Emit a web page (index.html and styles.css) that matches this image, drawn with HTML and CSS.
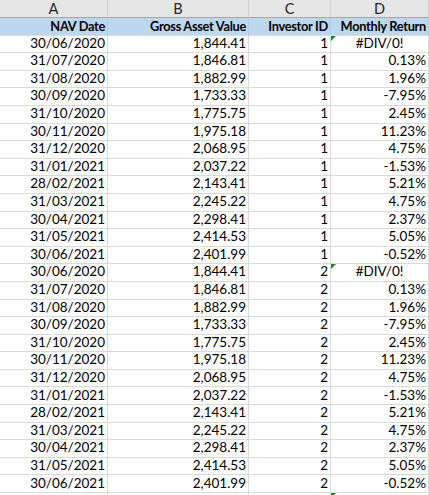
FILE: index.html
```html
<!DOCTYPE html>
<html>
<head>
<meta charset="utf-8">
<link rel="stylesheet" href="styles.css">
</head>
<body>
<div class="sheet">
  <div class="col-head">A</div><div class="col-head">B</div><div class="col-head">C</div><div class="col-head">D</div>
  <div class="hcell">NAV Date</div><div class="hcell">Gross Asset Value</div><div class="hcell">Investor ID</div><div class="hcell">Monthly Return</div>

  <div class="cell">30/06/2020</div><div class="cell">1,844.41</div><div class="cell">1</div><div class="cell err"><span class="tri"></span>#DIV/0!</div>
  <div class="cell">31/07/2020</div><div class="cell">1,846.81</div><div class="cell">1</div><div class="cell">0.13%</div>
  <div class="cell">31/08/2020</div><div class="cell">1,882.99</div><div class="cell">1</div><div class="cell">1.96%</div>
  <div class="cell">30/09/2020</div><div class="cell">1,733.33</div><div class="cell">1</div><div class="cell">-7.95%</div>
  <div class="cell">31/10/2020</div><div class="cell">1,775.75</div><div class="cell">1</div><div class="cell">2.45%</div>
  <div class="cell">30/11/2020</div><div class="cell">1,975.18</div><div class="cell">1</div><div class="cell">11.23%</div>
  <div class="cell">31/12/2020</div><div class="cell">2,068.95</div><div class="cell">1</div><div class="cell">4.75%</div>
  <div class="cell">31/01/2021</div><div class="cell">2,037.22</div><div class="cell">1</div><div class="cell">-1.53%</div>
  <div class="cell">28/02/2021</div><div class="cell">2,143.41</div><div class="cell">1</div><div class="cell">5.21%</div>
  <div class="cell">31/03/2021</div><div class="cell">2,245.22</div><div class="cell">1</div><div class="cell">4.75%</div>
  <div class="cell">30/04/2021</div><div class="cell">2,298.41</div><div class="cell">1</div><div class="cell">2.37%</div>
  <div class="cell">31/05/2021</div><div class="cell">2,414.53</div><div class="cell">1</div><div class="cell">5.05%</div>
  <div class="cell">30/06/2021</div><div class="cell">2,401.99</div><div class="cell">1</div><div class="cell">-0.52%</div>

  <div class="cell">30/06/2020</div><div class="cell">1,844.41</div><div class="cell">2</div><div class="cell err"><span class="tri"></span>#DIV/0!</div>
  <div class="cell">31/07/2020</div><div class="cell">1,846.81</div><div class="cell">2</div><div class="cell">0.13%</div>
  <div class="cell">31/08/2020</div><div class="cell">1,882.99</div><div class="cell">2</div><div class="cell">1.96%</div>
  <div class="cell">30/09/2020</div><div class="cell">1,733.33</div><div class="cell">2</div><div class="cell">-7.95%</div>
  <div class="cell">31/10/2020</div><div class="cell">1,775.75</div><div class="cell">2</div><div class="cell">2.45%</div>
  <div class="cell">30/11/2020</div><div class="cell">1,975.18</div><div class="cell">2</div><div class="cell">11.23%</div>
  <div class="cell">31/12/2020</div><div class="cell">2,068.95</div><div class="cell">2</div><div class="cell">4.75%</div>
  <div class="cell">31/01/2021</div><div class="cell">2,037.22</div><div class="cell">2</div><div class="cell">-1.53%</div>
  <div class="cell">28/02/2021</div><div class="cell">2,143.41</div><div class="cell">2</div><div class="cell">5.21%</div>
  <div class="cell">31/03/2021</div><div class="cell">2,245.22</div><div class="cell">2</div><div class="cell">4.75%</div>
  <div class="cell">30/04/2021</div><div class="cell">2,298.41</div><div class="cell">2</div><div class="cell">2.37%</div>
  <div class="cell">31/05/2021</div><div class="cell">2,414.53</div><div class="cell">2</div><div class="cell">5.05%</div>
  <div class="cell">30/06/2021</div><div class="cell">2,401.99</div><div class="cell">2</div><div class="cell">-0.52%</div>

  <div class="cell"></div><div class="cell"></div><div class="cell"></div><div class="cell"><span class="tri"></span></div>
</div>
</body>
</html>
```
FILE: styles.css
```css
html, body {
  margin: 0;
  padding: 0;
  background: #ffffff;
  overflow: hidden;
}

.sheet {
  display: grid;
  grid-template-columns: 108px 141px 82px 98px;
  grid-template-rows: 18px 17.6px;
  grid-auto-rows: 17.6px;
  font-family: Lato, "Liberation Sans", sans-serif;
  font-size: 13.5px;
  color: #000;
}

.col-head {
  background: #e6e6e6;
  border-right: 1px solid #d0d0d0;
  border-bottom: 1px solid #a6a6a6;
  color: #262626;
  font-size: 14.5px;
  display: flex;
  align-items: center;
  justify-content: center;
  box-sizing: border-box;
}

.hcell {
  background: #bdd7ee;
  border-right: 1px solid #b4cde3;
  border-bottom: 1px solid #d4dfe9;
  font-weight: bold;
  font-size: 12.8px;
  letter-spacing: -0.3px;
  display: flex;
  align-items: flex-end;
  justify-content: flex-end;
  padding: 0 2px 2px 0;
  box-sizing: border-box;
  line-height: 1;
  white-space: nowrap;
  overflow: hidden;
}

.cell {
  position: relative;
  border-right: 1px solid #dadada;
  border-bottom: 1px solid #dadada;
  display: flex;
  align-items: flex-end;
  justify-content: flex-end;
  padding: 0 2px 2px 0;
  box-sizing: border-box;
  line-height: 1;
  white-space: nowrap;
}

.cell.err {
  justify-content: center;
  padding-right: 0;
}

.tri {
  position: absolute;
  left: 0;
  top: 0;
  width: 0;
  height: 0;
  border-top: 5px solid #1f8a1f;
  border-right: 5px solid transparent;
}
```
